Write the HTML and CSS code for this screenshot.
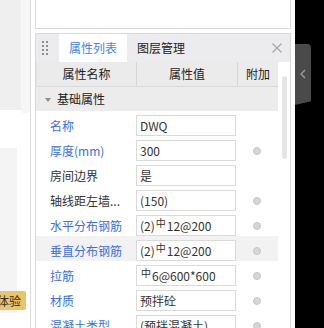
FILE: index.html
```html
<!DOCTYPE html>
<html lang="zh">
<head>
    <meta charset="UTF-8">
    <meta name="viewport" content="width=device-width, initial-scale=1.0">
    <title>属性列表</title>
    <link rel="stylesheet" href="styles.css">
</head>
<body>
    <div class="screen">
        <div class="canvas-side">
            <div class="canvas-content">
                <div class="canvas-top"></div>
                <div class="canvas-gap"></div>
                <div class="canvas-list">
                    <button class="trial-btn">体验</button>
                </div>
            </div>
            <div class="canvas-scroll"><div class="canvas-thumb"></div></div>
        </div>
        <div class="side-line"></div>

        <div class="dock">
            <div class="dock-top"></div>
            <div class="prop-panel">
                <div class="panel-head">
                    <div class="grip">
                        <svg width="6" height="14" viewBox="0 0 6 14">
                            <rect x="0" y="0" width="2" height="2"/><rect x="4" y="0" width="2" height="2"/>
                            <rect x="0" y="4" width="2" height="2"/><rect x="4" y="4" width="2" height="2"/>
                            <rect x="0" y="8" width="2" height="2"/><rect x="4" y="8" width="2" height="2"/>
                            <rect x="0" y="12" width="2" height="2"/><rect x="4" y="12" width="2" height="2"/>
                        </svg>
                    </div>
                    <div class="tab active">属性列表</div>
                    <div class="tab">图层管理</div>
                    <div class="head-space"></div>
                    <div class="close">
                        <svg width="10" height="10" viewBox="0 0 10 10">
                            <path d="M0.5 0.5 L9.5 9.5 M9.5 0.5 L0.5 9.5"/>
                        </svg>
                    </div>
                </div>

                <div class="panel-body">
                    <div class="prop-table">
                        <div class="thead">
                            <div class="th col-name">属性名称</div>
                            <div class="th col-val">属性值</div>
                            <div class="th col-ext">附加</div>
                        </div>
                        <div class="group"><span class="caret"></span>基础属性</div>

                        <div class="row">
                            <div class="col-name label blue">名称</div>
                            <div class="col-val"><div class="val-box">DWQ</div></div>
                            <div class="col-ext"></div>
                        </div>
                        <div class="row">
                            <div class="col-name label blue">厚度(mm)</div>
                            <div class="col-val"><div class="val-box">300</div></div>
                            <div class="col-ext"><span class="dot"></span></div>
                        </div>
                        <div class="row">
                            <div class="col-name label">房间边界</div>
                            <div class="col-val"><div class="val-box">是</div></div>
                            <div class="col-ext"></div>
                        </div>
                        <div class="row">
                            <div class="col-name label">轴线距左墙...</div>
                            <div class="col-val"><div class="val-box">(150)</div></div>
                            <div class="col-ext"><span class="dot"></span></div>
                        </div>
                        <div class="row">
                            <div class="col-name label blue">水平分布钢筋</div>
                            <div class="col-val"><div class="val-box">(2)<span class="rebar grade3">中</span>12@200</div></div>
                            <div class="col-ext"><span class="dot"></span></div>
                        </div>
                        <div class="row hover">
                            <div class="col-name label blue">垂直分布钢筋</div>
                            <div class="col-val"><div class="val-box">(2)<span class="rebar grade3">中</span>12@200</div></div>
                            <div class="col-ext"><span class="dot"></span></div>
                        </div>
                        <div class="row">
                            <div class="col-name label blue">拉筋</div>
                            <div class="col-val"><div class="val-box"><span class="rebar">中</span>6@600*600</div></div>
                            <div class="col-ext"><span class="dot"></span></div>
                        </div>
                        <div class="row">
                            <div class="col-name label blue">材质</div>
                            <div class="col-val"><div class="val-box">预拌砼</div></div>
                            <div class="col-ext"><span class="dot"></span></div>
                        </div>
                        <div class="row">
                            <div class="col-name label blue">混凝土类型</div>
                            <div class="col-val"><div class="val-box">(预拌混凝土)</div></div>
                            <div class="col-ext"><span class="dot"></span></div>
                        </div>
                    </div>
                    <div class="vscroll"><div class="vthumb"></div></div>
                </div>
            </div>
        </div>

        <div class="gap-right"></div>
        <div class="dark-side">
            <div class="collapse-tab">
                <svg width="6" height="10" viewBox="0 0 6 10">
                    <polyline points="5,1 1,5 5,9"/>
                </svg>
            </div>
        </div>
    </div>
</body>
</html>
```

FILE: styles.css
```css
body {
    margin: 0;
    font-family: "Noto Sans CJK SC", "Noto Sans", sans-serif;
    font-size: 12px;
    color: #333;
    background: #fff;
}
.screen {
    display: flex;
    height: 328px;
    overflow: hidden;
}

/* left canvas strip */
.canvas-side {
    width: 30px;
    display: flex;
    flex-shrink: 0;
}
.canvas-content {
    width: 21px;
    display: flex;
    flex-direction: column;
}
.canvas-top {
    height: 110px;
    flex-shrink: 0;
    background: #efefef;
}
.canvas-gap {
    height: 38px;
    flex-shrink: 0;
}
.canvas-list {
    width: 17px;
    height: 165px;
    flex-shrink: 0;
    background: #f4f4f4;
    padding-top: 143px;
    box-sizing: border-box;
}
.trial-btn {
    position: relative;
    z-index: 1;
    display: block;
    width: 26px;
    height: 19px;
    padding: 0 5px 0 0;
    border: none;
    border-radius: 0 2px 2px 0;
    background: #e9c46c;
    color: #3a2e12;
    font-family: inherit;
    font-size: 12px;
    line-height: 19px;
    text-align: right;
    white-space: nowrap;
    overflow: hidden;
    direction: rtl;
}
.canvas-scroll {
    width: 9px;
}
.canvas-thumb {
    width: 9px;
    height: 113px;
    background: #f6f6f6;
    border-radius: 0 0 3px 3px;
}
.side-line {
    width: 1px;
    background: #dcdcdc;
    margin-right: 4px;
    flex-shrink: 0;
}

/* dock column */
.dock {
    width: 256px;
    flex-shrink: 0;
    display: flex;
    flex-direction: column;
    min-height: 0;
}
.dock-top {
    height: 28px;
    flex-shrink: 0;
    border: 1px solid #d9d9d9;
    border-top: none;
    background: #fff;
}
.prop-panel {
    margin-top: 4px;
    flex: 1;
    min-height: 0;
    overflow: hidden;
    border: 1px solid #d9d9d9;
    border-bottom: none;
}
.panel-head {
    display: flex;
    align-items: stretch;
    height: 28px;
    background: #ececee;
}
.grip {
    width: 23px;
    display: flex;
    align-items: center;
    padding-left: 6px;
    box-sizing: border-box;
}
.grip svg {
    fill: #8c8c8c;
}
.tab {
    width: 68px;
    text-align: center;
    line-height: 28px;
    color: #222;
}
.tab.active {
    background: #fff;
    color: #3d87ee;
}
.head-space {
    flex: 1;
}
.close {
    display: flex;
    align-items: center;
    margin-right: 8px;
}
.close svg {
    stroke: #a6a6a6;
    stroke-width: 1.2;
    fill: none;
}

/* property table */
.panel-body {
    display: flex;
}
.prop-table {
    width: 242px;
}
.thead {
    display: flex;
    height: 24px;
    background: #ebebeb;
    border-bottom: 1px solid #dadada;
    border-left: 1px solid #e2e2e2;
}
.th {
    text-align: center;
    line-height: 24px;
    color: #222;
    box-sizing: border-box;
}
.col-name {
    width: 100px;
    flex-shrink: 0;
}
.col-val {
    width: 101px;
    flex-shrink: 0;
}
.col-ext {
    width: 40px;
    flex-shrink: 0;
    display: flex;
    justify-content: center;
    align-items: center;
}
.th.col-name,
.th.col-val {
    border-right: 1px solid #d6d6d6;
}
.group {
    height: 24px;
    line-height: 24px;
    background: #ececec;
    padding-left: 9px;
    color: #222;
}
.caret {
    display: inline-block;
    width: 0;
    height: 0;
    border-left: 3px solid transparent;
    border-right: 3px solid transparent;
    border-top: 4px solid #8c8c8c;
    margin-right: 6px;
    vertical-align: middle;
    position: relative;
    top: -1px;
}
.row {
    display: flex;
    align-items: center;
    height: 25px;
    padding-top: 4px;
    box-sizing: border-box;
}
.row.hover {
    background: #f2f2f2;
}
.label {
    padding-left: 14px;
    box-sizing: border-box;
    white-space: nowrap;
    overflow: hidden;
    color: #333;
}
.label.blue {
    color: #3a6ee8;
}
.val-box {
    width: 100px;
    height: 21px;
    box-sizing: border-box;
    border: 1px solid #dadada;
    background: #fff;
    padding-left: 3px;
    line-height: 19px;
    color: #333;
    white-space: nowrap;
    overflow: hidden;
}
.rebar {
    display: inline-block;
    font-size: 10px;
    line-height: 10px;
    vertical-align: 4px;
    margin: 0 1px;
}
.rebar.grade3 {
    text-decoration: overline;
}
.dot {
    width: 8px;
    height: 8px;
    box-sizing: border-box;
    border-radius: 50%;
    background: #d6d6d6;
    border: 1px solid #c6c6c6;
}
.vscroll {
    width: 12px;
    padding-left: 4px;
    box-sizing: border-box;
}
.vthumb {
    width: 5px;
    height: 83px;
    margin-top: 14px;
    border-radius: 3px;
    background: #e6e6e6;
}

/* dark right side */
.gap-right {
    width: 4px;
    flex-shrink: 0;
}
.dark-side {
    flex: 1;
    background: #000;
}
.collapse-tab {
    margin-top: 44px;
    width: 16px;
    height: 61px;
    background: #4a4a4a;
    border-top-right-radius: 4px;
    clip-path: polygon(0 0, 100% 0, 100% 94%, 0 100%);
    display: flex;
    align-items: center;
    justify-content: center;
    padding-bottom: 2px;
    box-sizing: border-box;
}
.collapse-tab svg {
    fill: none;
    stroke: #9a9a9a;
    stroke-width: 1.4;
}
```
